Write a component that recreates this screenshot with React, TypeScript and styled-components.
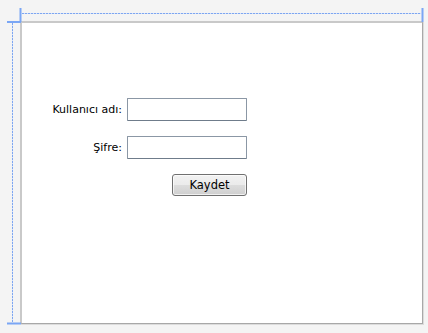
import * as React from 'react';
import styled, { createGlobalStyle } from 'styled-components';

const GlobalStyle = createGlobalStyle`
    html, body {
        margin: 0;
        padding: 0;
        background-color: #f4f4f4;
    }
`;

const Designer = styled.div`
    position: relative;
    width: 428px;
    height: 333px;
    padding: 21px 0 0 20px;
    box-sizing: border-box;
    font-family: "DejaVu Sans", "Noto Sans", sans-serif;
    font-size: 11px;
    color: #000;
`;

const Surface = styled.div`
    width: 403px;
    height: 303px;
    box-sizing: border-box;
    background-color: #fff;
    border-top: 2px solid #c9c9c9;
    border-left: 2px solid #c9c9c9;
    border-right: 1px solid #a8a8a8;
    border-bottom: 1px solid #a8a8a8;
    box-shadow: 1px 1px 0 #dcdcdc;
    padding-top: 75px;
`;

const FormGrid = styled.div`
    display: grid;
    grid-template-columns: 100px 120px;
    column-gap: 5px;
    row-gap: 15px;
    align-items: center;
`;

const Label = styled.label`
    text-align: right;
    white-space: nowrap;
`;

const TextBox = styled.input`
    width: 120px;
    height: 23px;
    box-sizing: border-box;
    margin: 0;
    border: 1px solid #8b97a5;
    border-bottom-color: #6f7c8b;
    border-radius: 1px;
    background: #fff;
    outline: none;
    font: inherit;
`;

const ButtonCell = styled.div`
    grid-column: 2;
    display: flex;
    justify-content: flex-end;
`;

const Button = styled.button`
    width: 75px;
    height: 22px;
    margin: 0;
    padding: 0;
    border: 1px solid #707070;
    border-radius: 3px;
    background: linear-gradient(#f2f2f2 0%, #ebebeb 50%, #dddddd 50%, #cfcfcf 100%);
    box-shadow: inset 0 0 0 1px rgba(255, 255, 255, 0.7);
    font: inherit;
    font-size: 11.5px;
    color: #000;
`;

const Adorners = styled.svg`
    position: absolute;
    left: 0;
    top: 0;
    pointer-events: none;
`;

export default function App() {
    return (
        <>
            <GlobalStyle />
            <Designer>
                <Surface>
                    <FormGrid>
                        <Label>Kullanıcı adı:</Label>
                        <TextBox />
                        <Label>Şifre:</Label>
                        <TextBox type="password" />
                        <ButtonCell>
                            <Button>Kaydet</Button>
                        </ButtonCell>
                    </FormGrid>
                </Surface>
                <Adorners width="428" height="333">
                    <line x1="22" y1="13.5" x2="421" y2="13.5" stroke="#d3e1fb" strokeWidth="1" />
                    <line x1="22" y1="13.5" x2="421" y2="13.5" stroke="#7ea6f0" strokeWidth="1" strokeDasharray="2 1" />
                    <line x1="12.5" y1="23" x2="12.5" y2="322" stroke="#d3e1fb" strokeWidth="1" />
                    <line x1="12.5" y1="23" x2="12.5" y2="322" stroke="#7ea6f0" strokeWidth="1" strokeDasharray="2 1" />
                    <line x1="20.5" y1="8" x2="20.5" y2="22" stroke="#7aa6f5" strokeWidth="2" />
                    <line x1="422.5" y1="8" x2="422.5" y2="22" stroke="#7aa6f5" strokeWidth="2" />
                    <line x1="7" y1="22" x2="21" y2="22" stroke="#7aa6f5" strokeWidth="2" />
                    <line x1="7" y1="323.5" x2="21" y2="323.5" stroke="#7aa6f5" strokeWidth="2" />
                </Adorners>
            </Designer>
        </>
    );
}
